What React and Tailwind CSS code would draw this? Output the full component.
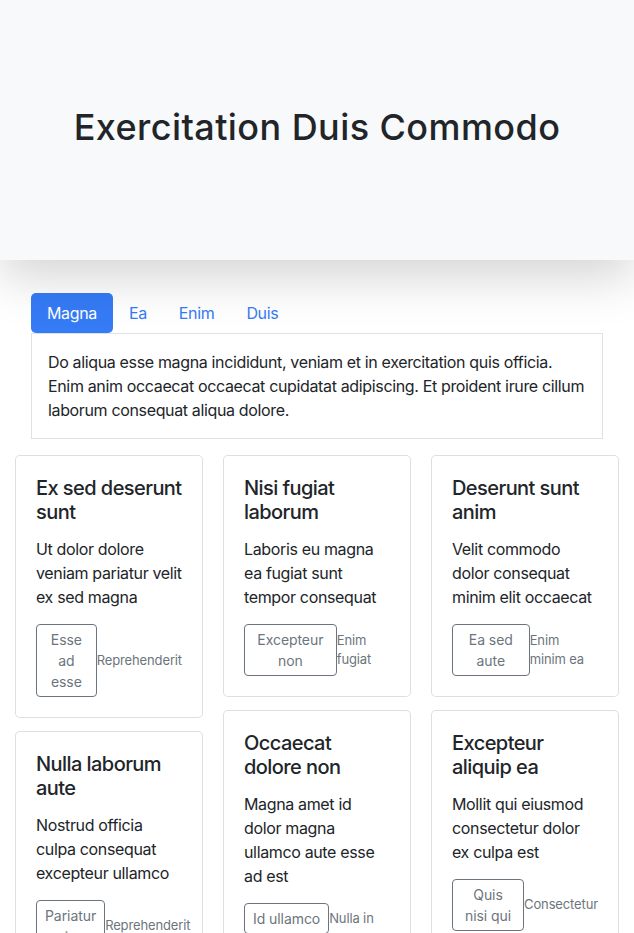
const tabs = ['Magna', 'Ea', 'Enim', 'Duis'];

const columns = [
  [
    { title: 'Ex sed deserunt sunt', text: 'Ut dolor dolore veniam pariatur velit ex sed magna', btn: 'Esse ad esse', note: 'Reprehenderit' },
    { title: 'Nulla laborum aute', text: 'Nostrud officia culpa consequat excepteur ullamco', btn: 'Pariatur in', note: 'Reprehenderit' },
  ],
  [
    { title: 'Nisi fugiat laborum', text: 'Laboris eu magna ea fugiat sunt tempor consequat', btn: 'Excepteur non', note: 'Enim fugiat' },
    { title: 'Occaecat dolore non', text: 'Magna amet id dolor magna ullamco aute esse ad est', btn: 'Id ullamco', note: 'Nulla in' },
  ],
  [
    { title: 'Deserunt sunt anim', text: 'Velit commodo dolor consequat minim elit occaecat', btn: 'Ea sed aute', note: 'Enim minim ea' },
    { title: 'Excepteur aliquip ea', text: 'Mollit qui eiusmod consectetur dolor ex culpa est', btn: 'Quis nisi qui', note: 'Consectetur' },
  ],
];

function Card({ card }) {
  return (
    <div className="bg-white border border-black/[.125] rounded-[5px] p-5">
      <h5 className="text-[20px] font-medium leading-6 tracking-[-0.028em] mb-[13px]">{card.title}</h5>
      <p className="text-[16px] leading-6 tracking-[-0.022em] mb-[15px]">{card.text}</p>
      <div className="flex items-center">
        <button className="border border-[#6c757d] text-[#6c757d] rounded-[4px] px-2 py-1 text-[14px] leading-[21px] tracking-[-0.005em] text-center">
          {card.btn}
        </button>
        <small className="text-[#6c757d] text-[13px] leading-[19.5px] tracking-[-0.01em]">{card.note}</small>
      </div>
    </div>
  );
}

export default function App() {
  return (
    <div className="min-h-screen bg-white text-[#212529] font-['Inter',sans-serif]">
      <div className="relative z-10 h-[260px] flex items-center justify-center bg-[#f8f9fa] shadow-[0_1rem_3rem_rgba(0,0,0,0.175)]">
        <h1 className="text-[36px] font-medium leading-[1.2] tracking-[0.012em] -mt-1">Exercitation Duis Commodo</h1>
      </div>

      <div className="px-[31px] mt-[33px]">
        <div className="flex">
          {tabs.map((t, i) => (
            <a
              key={t}
              className={
                i === 0
                  ? 'px-4 py-2 text-[16px] leading-6 tracking-[-0.022em] rounded-[5px] bg-[#357bf6] text-white'
                  : 'px-4 py-2 text-[16px] leading-6 tracking-[-0.022em] text-[#357bf6]'
              }
            >
              {t}
            </a>
          ))}
        </div>
        <div className="border border-[#dee2e6] p-4 text-[16px] leading-6 tracking-[-0.022em]">
          Do aliqua esse magna incididunt, veniam et in exercitation quis officia. Enim anim occaecat occaecat cupidatat adipiscing. Et proident irure cillum laborum consequat aliqua dolore.
        </div>
      </div>

      <div className="grid grid-cols-3 gap-x-5 px-[15px] mt-4 items-start">
        {columns.map((col, ci) => (
          <div key={ci} className="flex flex-col gap-[13px]">
            {col.map((card) => (
              <Card key={card.title} card={card} />
            ))}
          </div>
        ))}
      </div>
    </div>
  );
}
